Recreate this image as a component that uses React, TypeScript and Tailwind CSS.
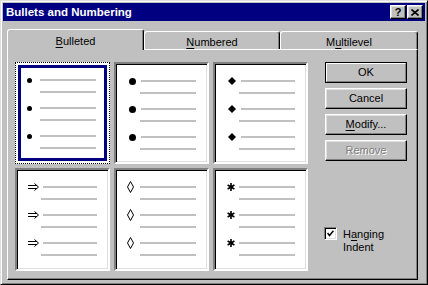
import React from 'react';

const Line = ({ className = 'w-[56px]' }: { className?: string }) => (
  <div className={`h-[2px] bg-[#c0c0c0] ${className}`} />
);

const Dot = ({ size }: { size: string }) => <div className={`rounded-full bg-black ${size}`} />;

const Diamond = () => (
  <svg width="8" height="8" viewBox="0 0 8 8">
    <polygon points="4,0 8,4 4,8 0,4" fill="#000" />
  </svg>
);

const Arrow = () => (
  <svg width="12" height="8" viewBox="0 0 12 8" fill="none" stroke="#000" strokeWidth="1">
    <path d="M0 2.5H9M0 5.5H9M6.5 0.5L10.5 4L6.5 7.5" />
  </svg>
);

const Lozenge = () => (
  <svg width="7" height="12" viewBox="0 0 7 12" fill="none" stroke="#000" strokeWidth="1">
    <polygon points="3.5,0.5 6.5,6 3.5,11.5 0.5,6" />
  </svg>
);

const Star = () => (
  <svg width="8" height="8" viewBox="0 0 8 8" fill="none" stroke="#000" strokeWidth="1.6">
    <path d="M4 0V8M0.6 2L7.4 6M0.6 6L7.4 2" />
  </svg>
);

const cells = [
  { pad: 'pl-[2px]', line: 'w-[56px]', mark: <Dot size="w-[5px] h-[5px]" />, selected: true },
  { pad: 'pl-[8px]', line: 'ml-[1px] w-[55px]', mark: <Dot size="w-[7px] h-[7px]" /> },
  { pad: 'pl-[10px]', line: 'ml-[2px] w-[54px]', mark: <Diamond /> },
  { pad: 'pl-[10px]', line: 'ml-[2px] w-[54px]', mark: <Arrow /> },
  { pad: 'pl-[4px]', line: 'w-[56px]', mark: <Lozenge /> },
  { pad: 'pl-[8px]', line: 'w-[56px]', mark: <Star /> },
];

const BulletCell = ({ cell }: { cell: (typeof cells)[number] }) => (
  <div
    className={`relative bg-white ${
      cell.selected
        ? 'border border-dotted border-black p-px'
        : 'border-2 border-t-[#808080] border-l-[#808080] border-r-white border-b-white shadow-[inset_1px_1px_0_#000,inset_-1px_-1px_0_#dfdfdf]'
    }`}
  >
    <div className={`flex flex-col gap-[4px] pt-[11px] ${cell.selected ? '-mt-px -ml-px' : ''}`}>
      {[0, 1, 2].map((i) => (
        <div key={i} className="flex flex-col">
          <div className="flex h-[12px] items-center">
            <div className={`flex w-[24px] justify-center ${cell.pad}`}>{cell.mark}</div>
            <Line className={cell.line} />
          </div>
          <div className="flex h-[12px] items-center pl-[24px]">
            <Line />
          </div>
        </div>
      ))}
    </div>
    {cell.selected && <div className="absolute inset-[2px] border-[3px] border-[#000080]" />}
  </div>
);

const raised =
  'border border-t-white border-l-white border-r-black border-b-black shadow-[inset_-1px_-1px_0_#808080,inset_1px_1px_0_#dfdfdf]';

const Button = ({ children, def, disabled }: { children: React.ReactNode; def?: boolean; disabled?: boolean }) =>
  def ? (
    <div className="h-[21px] w-[82px] border border-black">
      <div className="flex h-full items-center justify-center border border-t-white border-l-white border-r-[#808080] border-b-[#808080]">
        {children}
      </div>
    </div>
  ) : (
    <div
      className={`flex h-[21px] w-[82px] items-center justify-center ${raised} ${
        disabled ? 'text-[#808080] [text-shadow:1px_1px_0_#fff]' : ''
      }`}
    >
      {children}
    </div>
  );

const Tab = ({ children, active, w }: { children: React.ReactNode; active?: boolean; w: string }) => (
  <div
    className={`flex items-center justify-center rounded-t-[3px] border-t border-l border-r border-t-white border-l-white border-r-black bg-[#c0c0c0] shadow-[inset_-1px_0_0_#808080] ${w} ${
      active ? 'relative z-10 -mb-px h-[21px] pt-[2px]' : 'h-[18px] pt-[3px]'
    }`}
  >
    {children}
  </div>
);

export default function App() {
  return (
    <div className="h-[285px] w-[428px] border border-t-[#dfdfdf] border-l-[#dfdfdf] border-r-black border-b-black bg-[#c0c0c0] p-[2px] font-['Liberation_Sans',Arial,sans-serif] text-[11px] leading-[13px] text-black shadow-[inset_1px_1px_0_#fff,inset_-1px_-1px_0_#808080]">
      <div className="flex h-[18px] items-center justify-between bg-[#000080] pl-[3px] pr-[2px]">
        <span className="text-[11.5px] font-bold text-white">Bullets and Numbering</span>
        <div className="flex gap-[1px]">
          <div className={`flex h-[14px] w-[16px] items-center justify-center bg-[#c0c0c0] text-[11px] font-bold ${raised}`}>?</div>
          <div className={`flex h-[14px] w-[16px] items-center justify-center bg-[#c0c0c0] ${raised}`}>
            <svg width="8" height="7" viewBox="0 0 8 7" fill="none" stroke="#000" strokeWidth="1.6">
              <path d="M0.5 0.5L7.5 6.5M7.5 0.5L0.5 6.5" />
            </svg>
          </div>
        </div>
      </div>

      <div className="pl-[4px] pt-[8px]">
        <div className="flex h-[20px] items-end">
          <Tab active w="w-[137px]">
            <span>
              <u className="underline-offset-2">B</u>ulleted
            </span>
          </Tab>
          <Tab w="w-[136px]">
            <span>
              <u className="underline-offset-2">N</u>umbered
            </span>
          </Tab>
          <Tab w="w-[138px]">
            <span>
              M<u className="underline-offset-2">u</u>ltilevel
            </span>
          </Tab>
        </div>

        <div className="h-[231px] w-[411px] border border-t-white border-l-white border-r-black border-b-black pl-[7px] pt-[12px] shadow-[inset_-1px_-1px_0_#808080]">
          <div className="flex">
            <div className="grid grid-cols-[95px_95px_95px] grid-rows-[102px_103px] gap-[4px]">
              {cells.map((c, i) => (
                <BulletCell key={i} cell={c} />
              ))}
            </div>

            <div className="ml-[17px] flex flex-col">
              <div className="flex flex-col gap-[5px]">
                <Button def>OK</Button>
                <Button>Cancel</Button>
                <Button>
                  <span>
                    <u className="underline-offset-2">M</u>odify...
                  </span>
                </Button>
                <Button disabled>Remove</Button>
              </div>
              <div className="-ml-px mt-[66px] flex items-start gap-[6px]">
                <div className="flex h-[13px] w-[13px] items-center justify-center border border-t-[#808080] border-l-[#808080] border-r-white border-b-white bg-white shadow-[inset_1px_1px_0_#000,inset_-1px_-1px_0_#dfdfdf]">
                  <svg width="7" height="7" viewBox="0 0 7 7" fill="none" stroke="#000" strokeWidth="1.5">
                    <path d="M0.5 3L2.5 5.5L6.5 0.8" />
                  </svg>
                </div>
                <div className="pt-[1px]">
                  <div>
                    H<u className="underline-offset-2">a</u>nging
                  </div>
                  <div>Indent</div>
                </div>
              </div>
            </div>
          </div>
        </div>
      </div>
    </div>
  );
}
